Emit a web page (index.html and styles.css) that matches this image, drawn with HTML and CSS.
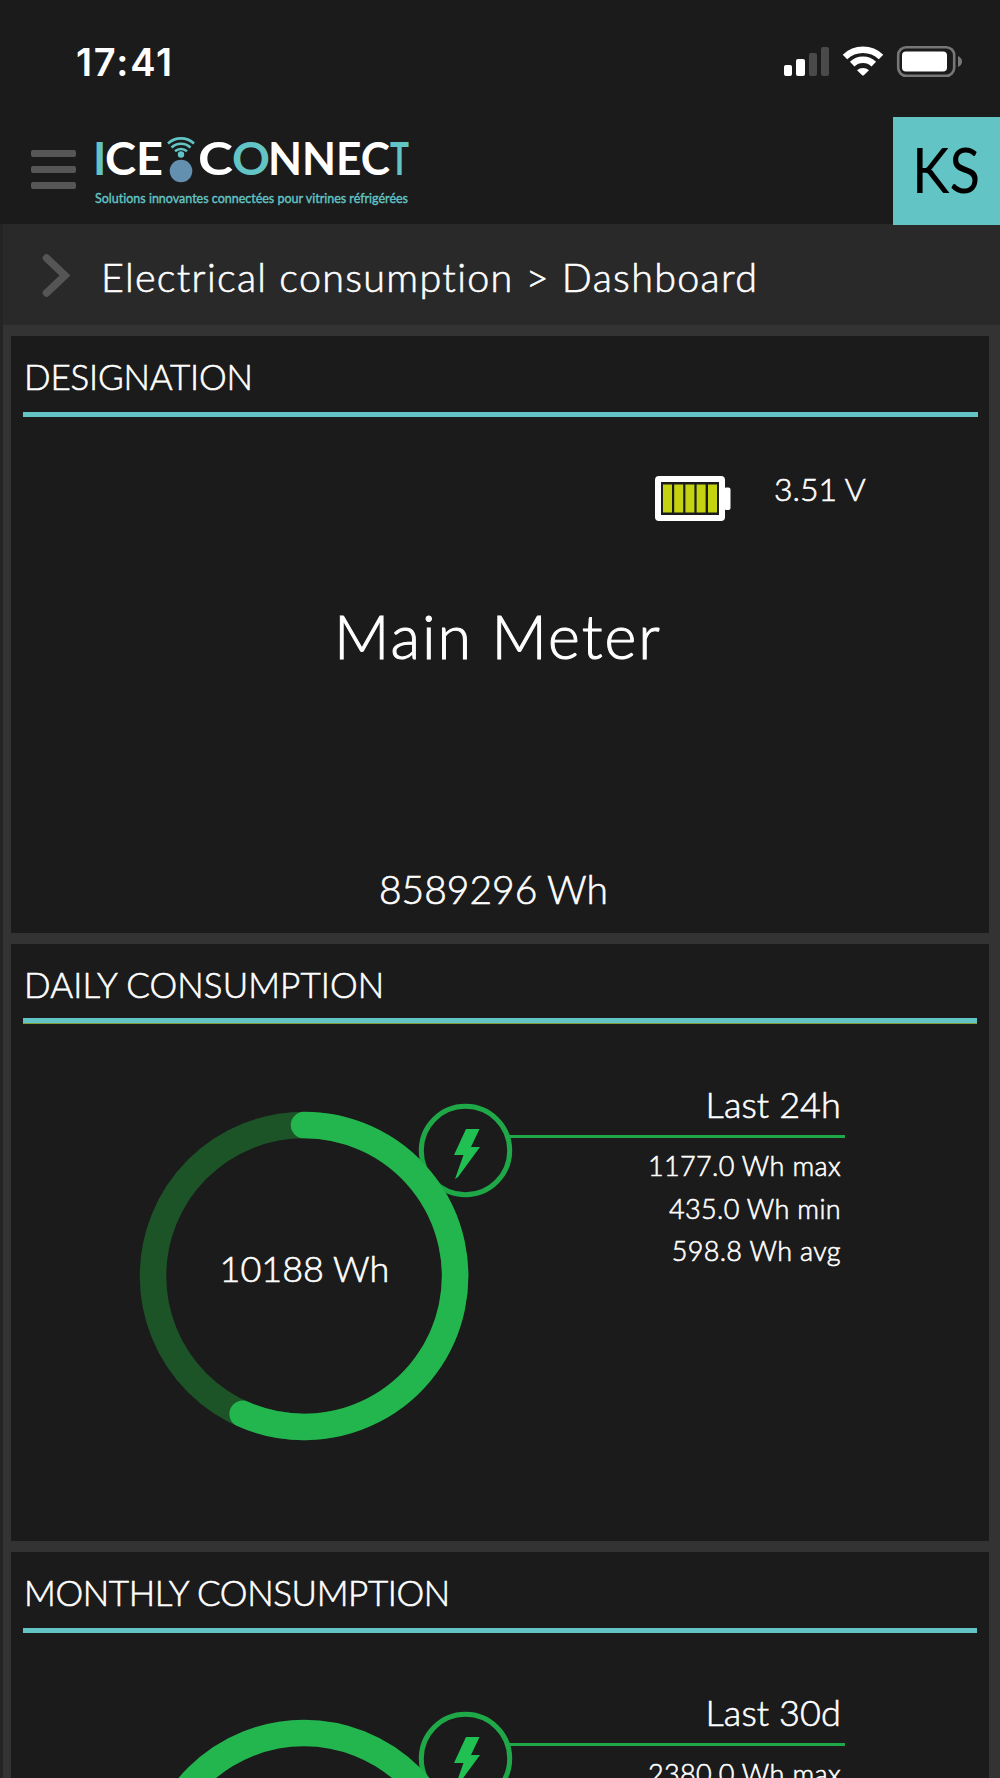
FILE: index.html
```html
<!DOCTYPE html>
<html lang="en">
<head>
    <meta charset="UTF-8">
    <meta name="viewport" content="width=device-width, initial-scale=1.0">
    <title>ICE Connect - Dashboard</title>
    <link rel="stylesheet" href="styles.css">
</head>
<body>
    <div class="status-bar">
        <span class="time">17:41</span>
        <svg class="status-icons" width="184" height="36" viewBox="781 44 184 36">
            <rect x="784" y="65" width="8" height="11" rx="2" fill="#fff"/>
            <rect x="796" y="59" width="9" height="17" rx="2" fill="#fff"/>
            <rect x="809" y="53" width="8" height="23" rx="2" fill="#4a4a4a"/>
            <rect x="821" y="47" width="8" height="29" rx="2" fill="#4a4a4a"/>
            <g fill="none" stroke="#fff" stroke-width="6.500">
                <path d="M845 57 A26 26 0 0 1 881 57"/>
                <path d="M852.2 64.2 A15.5 15.5 0 0 1 873.8 64.2"/>
            </g>
            <path d="M857 70.2 A9 9 0 0 1 869 70.2 L863.8 75.2 Q863 76 862.2 75.2 Z" fill="#fff"/>
            <rect x="898.2" y="47.2" width="56" height="28.600" rx="8" fill="none" stroke="#777" stroke-width="2.600"/>
            <rect x="902" y="51.500" width="45" height="20" rx="4" fill="#fff"/>
            <path d="M958 56 Q962 58 962 61.500 Q962 65 958 67 Z" fill="#777"/>
        </svg>
    </div>

    <header class="header">
        <div class="menu-button">
            <span></span>
            <span></span>
            <span></span>
        </div>
        <svg class="logo" width="320" height="80" viewBox="93 130 320 80">
            <g class="logo-word">
                <text x="93" y="175" class="teal">I</text>
                <text x="105" y="175" textLength="58" lengthAdjust="spacingAndGlyphs">CE</text>
                <text x="198" y="175" textLength="35" lengthAdjust="spacingAndGlyphs">C</text>
                <text x="232" y="175" textLength="38" lengthAdjust="spacingAndGlyphs" class="teal">O</text>
                <text x="268" y="175" textLength="122" lengthAdjust="spacingAndGlyphs">NNEC</text>
                <text x="390" y="175" textLength="19" lengthAdjust="spacingAndGlyphs" class="teal">T</text>
            </g>
            <!-- antenna between the two words -->
            <g fill="none" stroke="#62c4c4" stroke-width="2.600">
                <path d="M168 143.500 A19 19 0 0 1 194 143.500"/>
                <path d="M171.500 147.500 A14 14 0 0 1 190.500 147.500"/>
                <path d="M175 151.300 A9 9 0 0 1 187 151.300"/>
            </g>
            <circle cx="181" cy="154.500" r="3.200" class="teal"/>
            <circle cx="181" cy="171" r="11.300" fill="#6490b0"/>
            <text class="logo-tagline" x="95" y="203" textLength="313" lengthAdjust="spacingAndGlyphs">Solutions innovantes connectées pour vitrines réfrigérées</text>
        </svg>
        <div class="avatar">
            <svg width="107" height="108" viewBox="893 117 107 108">
                <text x="912" y="193" textLength="68" lengthAdjust="spacingAndGlyphs">KS</text>
            </svg>
        </div>
    </header>

    <nav class="breadcrumb">
        <svg width="30" height="48" viewBox="41 250 30 48">
            <path d="M46.500 257 L65 274.500 L46.500 292" fill="none" stroke="#555" stroke-width="7.500" stroke-linecap="round" stroke-linejoin="miter"/>
        </svg>
        <span>Electrical consumption &gt; Dashboard</span>
    </nav>

    <main class="panels">
        <section class="panel">
            <h2 class="panel-title designation-title">DESIGNATION</h2>
            <div class="battery">
                <svg width="76" height="46" viewBox="0 0 76 46">
                    <rect x="3" y="3" width="64" height="39" rx="1" fill="none" stroke="#fff" stroke-width="6"/>
                    <rect x="69" y="11.500" width="6.500" height="22.500" rx="2" fill="#fff"/>
                    <g fill="#c3d30f">
                        <rect x="8" y="8.500" width="9" height="28"/>
                        <rect x="19.200" y="8.500" width="9" height="28"/>
                        <rect x="30.400" y="8.500" width="9" height="28"/>
                        <rect x="41.600" y="8.500" width="9" height="28"/>
                        <rect x="53" y="8.500" width="9" height="28"/>
                    </g>
                </svg>
                <span>3.51 V</span>
            </div>
            <div class="meter-name">Main Meter</div>
            <div class="meter-total">8589296 Wh</div>
        </section>

        <section class="panel">
            <h2 class="panel-title daily-title">DAILY CONSUMPTION</h2>
            <div class="consumption">
                <svg class="gauge" width="502" height="400" viewBox="11 1080 502 400">
                    <circle cx="465.500" cy="1150.500" r="44.200" fill="none" stroke="#1fa847" stroke-width="5"/>
                    <path d="M466 1129 H479.500 L471 1147 H480 L458 1177 L455 1179 L463.500 1155 H454 Z" fill="#21c052"/>
                    <circle cx="304" cy="1276" r="151" fill="none" stroke="#1c5427" stroke-width="26.500"/>
                    <path d="M304 1125 A151 151 0 1 1 242.600 1413.900" fill="none" stroke="#23b64e" stroke-width="26.500" stroke-linecap="round"/>
                    <text class="gauge-value" x="219.500" y="1282">10188 Wh</text>
                </svg>
                <div class="stats">
                    <h3 class="stats-title">Last 24h</h3>
                    <ul>
                        <li>1177.0 Wh max</li>
                        <li>435.0 Wh min</li>
                        <li>598.8 Wh avg</li>
                    </ul>
                </div>
            </div>
        </section>

        <section class="panel last-panel">
            <h2 class="panel-title monthly-title">MONTHLY CONSUMPTION</h2>
            <div class="consumption">
                <svg class="gauge" width="502" height="400" viewBox="11 1080 502 400">
                    <circle cx="465.500" cy="1150.500" r="44.200" fill="none" stroke="#1fa847" stroke-width="5"/>
                    <path d="M466 1129 H479.500 L471 1147 H480 L458 1177 L455 1179 L463.500 1155 H454 Z" fill="#21c052"/>
                    <circle cx="304" cy="1276" r="151" fill="none" stroke="#23b64e" stroke-width="26.500"/>
                </svg>
                <div class="stats">
                    <h3 class="stats-title">Last 30d</h3>
                    <ul>
                        <li>2380.0 Wh max</li>
                    </ul>
                </div>
            </div>
        </section>
    </main>
</body>
</html>
```
FILE: styles.css
```css
* {
    box-sizing: border-box;
}
body {
    margin: 0;
    height: 1778px;
    overflow: hidden;
    display: flex;
    flex-direction: column;
    background-color: #333;
    color: #fff;
    font-family: Lato, sans-serif;
    font-weight: 300;
    font-variant-ligatures: none;
    -webkit-text-stroke: 0.6px #fff;
}
svg {
    display: block;
    flex-shrink: 0;
}
.status-bar {
    height: 117px;
    flex-shrink: 0;
    display: flex;
    justify-content: space-between;
    padding: 44px 35px 0 76px;
    background-color: #1b1b1b;
}
.time {
    font-family: Inter, sans-serif;
    font-size: 38px;
    font-weight: 600;
    line-height: 36px;
    letter-spacing: 1.8px;
    -webkit-text-stroke: 0;
}
.header {
    height: 107px;
    flex-shrink: 0;
    display: flex;
    padding-left: 31px;
    background-color: #1b1b1b;
}
.menu-button {
    width: 45px;
    margin: 33px 17px 0 0;
    display: flex;
    flex-direction: column;
    gap: 9px;
}
.menu-button span {
    height: 7px;
    border-radius: 2px;
    background-color: #565656;
}
.logo {
    margin-top: 13px;
    overflow: visible;
}
.logo-word {
    font-size: 45px;
    font-weight: 700;
    fill: #fff;
}
.teal {
    fill: #62c4c4;
}
.logo-tagline {
    font-size: 14px;
    font-weight: 400;
    fill: #62c4c4;
    stroke: #62c4c4;
    stroke-width: 0.4px;
}
.avatar {
    width: 107px;
    height: 108px;
    margin-left: auto;
    z-index: 1;
    background-color: #62c4c4;
}
.avatar text {
    font-size: 62px;
    font-weight: 400;
    fill: #000;
}
.breadcrumb {
    height: 101px;
    flex-shrink: 0;
    display: flex;
    align-items: center;
    gap: 30px;
    padding-left: 38px;
    border-left: 3px solid #222524;
    background-color: #292929;
    font-size: 39.5px;
    letter-spacing: 1.3px;
}
.breadcrumb span {
    padding-top: 3px;
}
.panels {
    flex: 1;
    min-height: 0;
    display: flex;
    flex-direction: column;
    gap: 11px;
    padding: 11px 11px 0 8px;
    border-left: 3px solid #222524;
}
.panel {
    height: 597px;
    flex-shrink: 0;
    background-color: #1b1b1b;
}
.last-panel {
    flex: 1;
    min-height: 0;
    overflow: hidden;
}
.panel-title {
    height: 81px;
    margin: 0 11px 0 12px;
    padding: 19px 0 0 1px;
    border-bottom: 5px solid #62c4c4;
    font-size: 35px;
    font-weight: 300;
    line-height: 42px;
}
.designation-title {
    letter-spacing: -0.2px;
}
.daily-title {
    height: 79px;
    margin: 0 12px 1px 12px;
    box-shadow: 0 1px #7f9a35;
    letter-spacing: 0.1px;
}
.monthly-title {
    margin: 0 12px 0 12px;
    letter-spacing: -0.38px;
}
.battery {
    display: flex;
    gap: 43px;
    height: 49px;
    margin-top: 55px;
    padding-left: 644px;
    font-size: 32px;
    line-height: 34px;
}
.battery svg {
    margin-top: 4px;
}
.meter-name {
    margin-top: 79px;
    padding-right: 4px;
    text-align: center;
    font-size: 61px;
    line-height: 72px;
    letter-spacing: 2px;
    -webkit-text-stroke: 1px #fff;
}
.meter-total {
    margin-top: 193px;
    padding-right: 13px;
    text-align: center;
    font-size: 39px;
    line-height: 48px;
}
.consumption {
    display: flex;
    padding-top: 56px;
}
.monthly-title + .consumption {
    padding-top: 55px;
}
.gauge-value {
    font-size: 36px;
    fill: #fff;
    stroke: #fff;
    stroke-width: 0.6px;
}
.stats {
    width: 340px;
    margin: 1px 0 0 -8px;
    text-align: right;
}
.stats-title {
    margin: 0;
    padding: 1px 4px 9px 0;
    border-bottom: 3px solid #1fa847;
    font-size: 36px;
    font-weight: 300;
    line-height: 44px;
    letter-spacing: 0.1px;
}
.stats ul {
    margin: 7px 0 0;
    padding: 0 4px 0 0;
    list-style: none;
    font-size: 27px;
    line-height: 42.7px;
    letter-spacing: 0.35px;
}
```
